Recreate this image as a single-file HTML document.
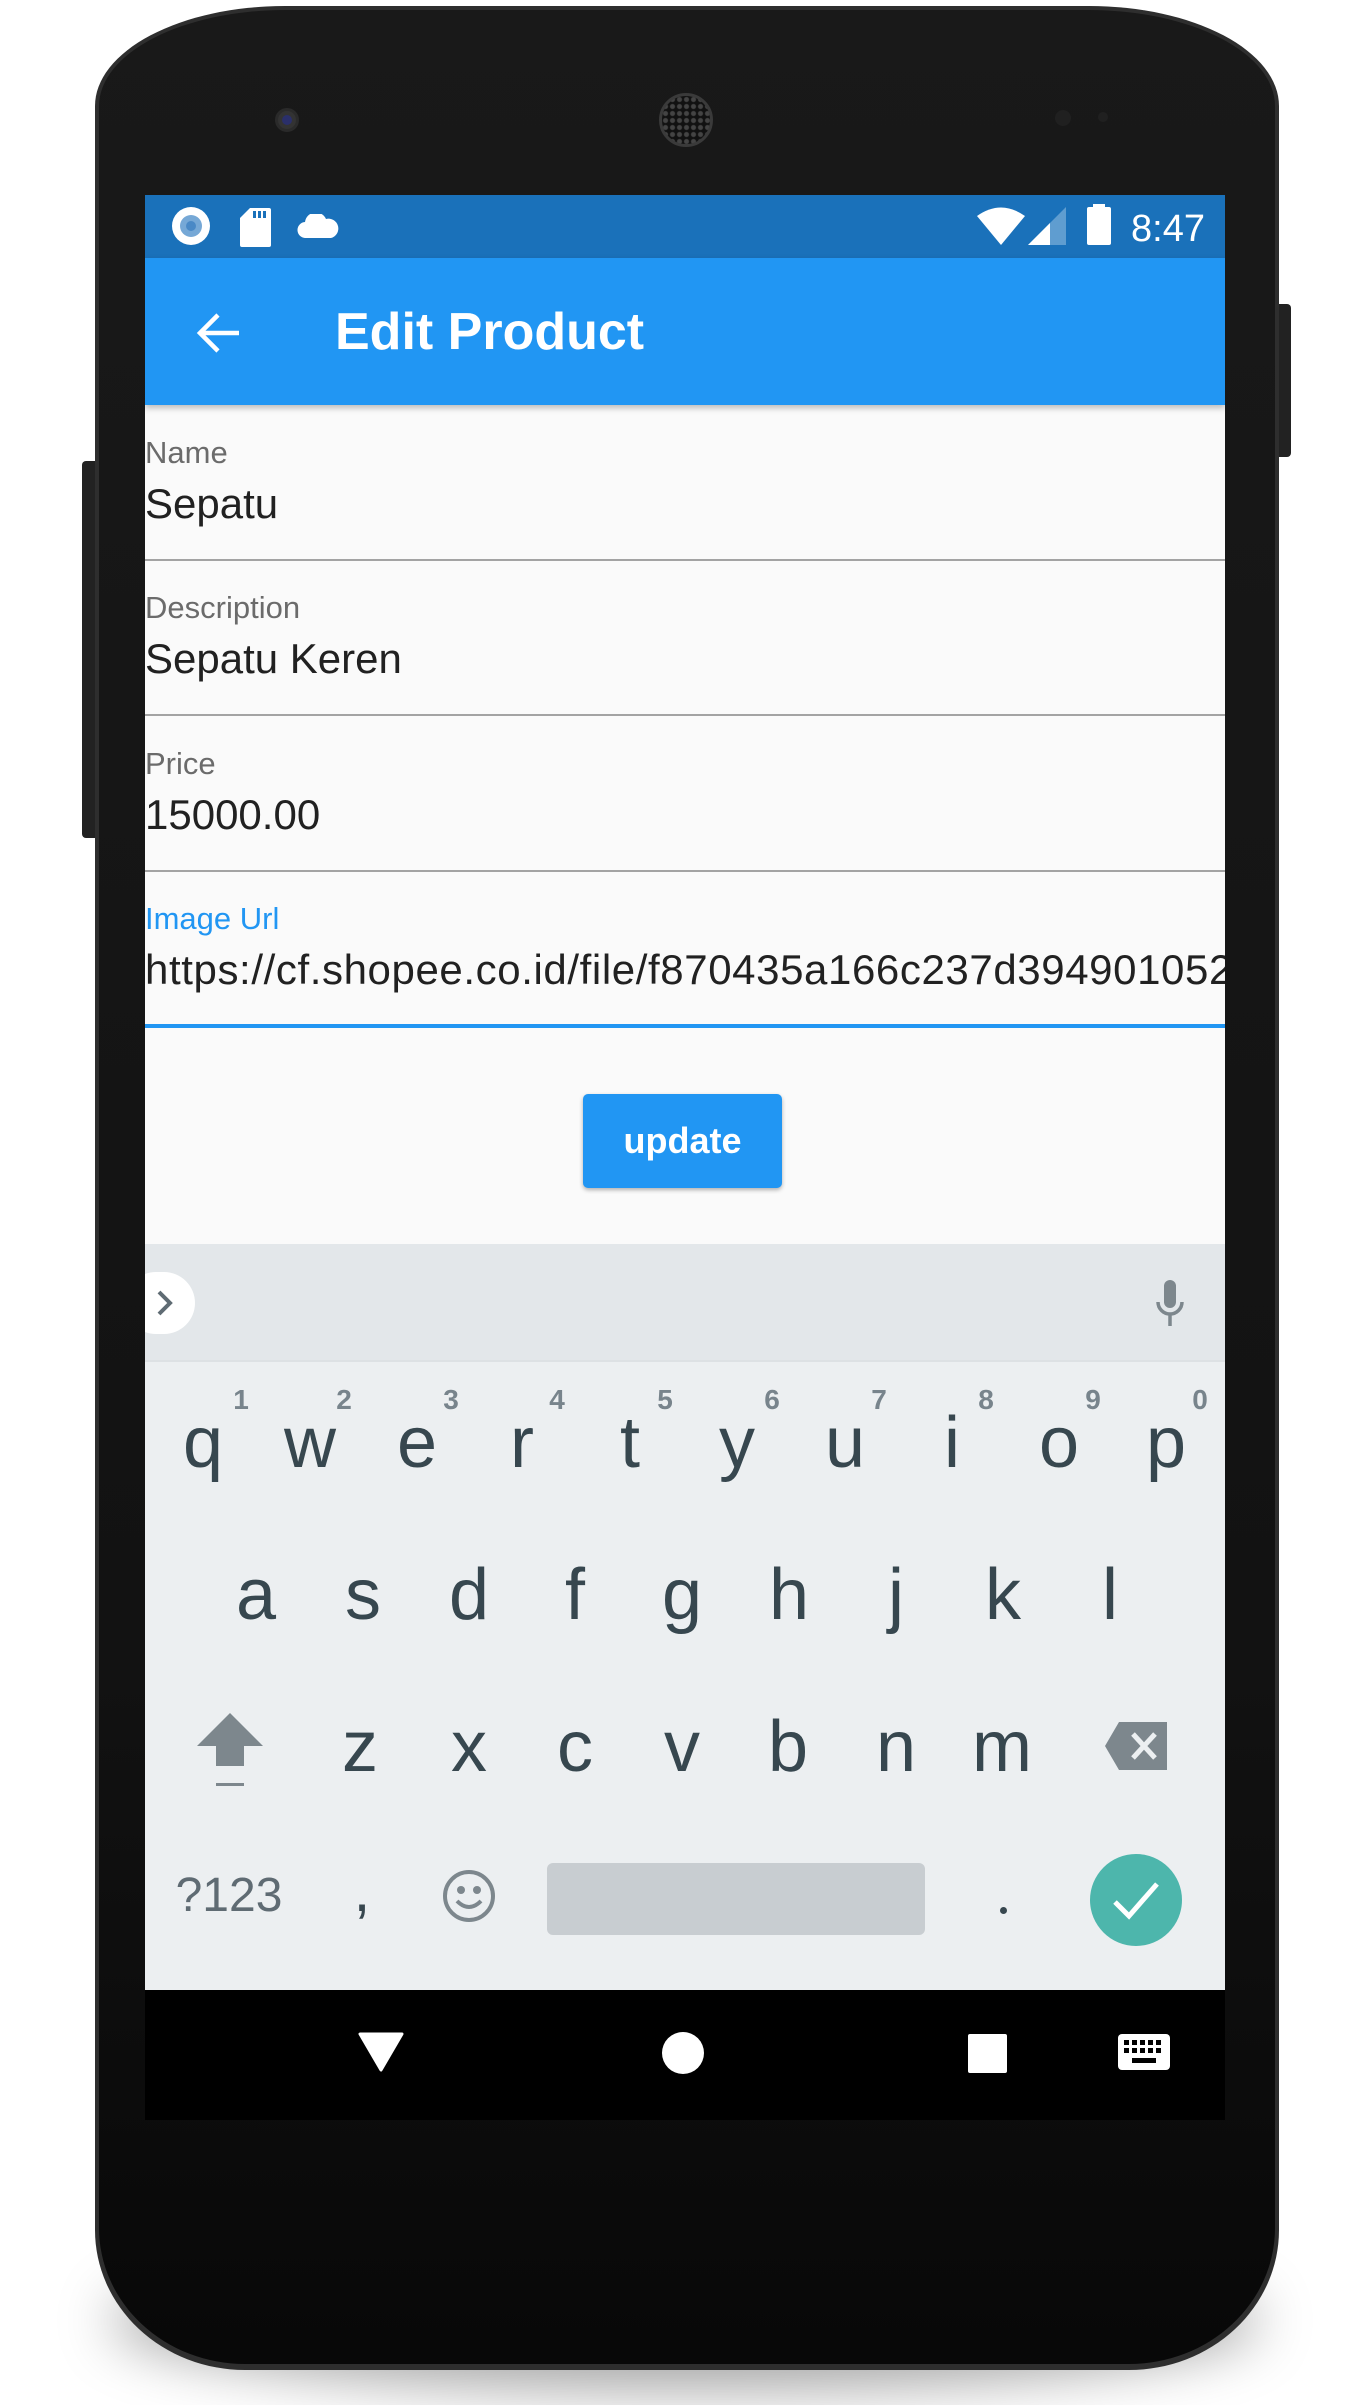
<!DOCTYPE html>
<html><head><meta charset="utf-8"><style>
*{margin:0;padding:0;box-sizing:border-box}
html,body{width:1370px;height:2405px;background:#fff;overflow:hidden;font-family:"Liberation Sans",Roboto,sans-serif}
.abs{position:absolute}
.t{position:absolute;white-space:nowrap}
.lbl{font-size:31px;line-height:31px;color:#6b6b6b}
.val{font-size:42px;line-height:42px;color:#212121}
.k{position:absolute;width:100px;text-align:center;font-size:72px;line-height:72px;color:#37474f}
.n{position:absolute;width:40px;text-align:center;font-size:28px;line-height:28px;font-weight:bold;color:#78848c}
</style></head><body>
<!-- shadow -->
<div class="abs" style="left:110px;top:2250px;width:1150px;height:140px;border-radius:50%;background:rgba(0,0,0,0.35);filter:blur(28px)"></div>
<!-- side buttons -->
<div class="abs" style="left:82px;top:461px;width:20px;height:377px;background:#222;border-radius:4px"></div>
<div class="abs" style="left:1270px;top:304px;width:21px;height:153px;background:#222;border-radius:4px"></div>
<!-- body -->
<div class="abs" style="left:95px;top:6px;width:1184px;height:2364px;background:#2e2e2e;border-radius:190px 190px 150px 150px / 100px 100px 140px 140px"></div>
<div class="abs" style="left:99px;top:10px;width:1176px;height:2354px;background:linear-gradient(#191919,#121212 70%,#080808);border-radius:186px 186px 146px 146px / 96px 96px 136px 136px"></div>
<!-- camera & speaker -->
<div class="abs" style="left:275px;top:108px;width:24px;height:24px;border-radius:50%;background:#333;border:3px solid #2a2a2a"></div>
<div class="abs" style="left:282px;top:115px;width:10px;height:10px;border-radius:50%;background:#2a2f6a"></div>
<div class="abs" style="left:659px;top:93px;width:54px;height:54px;border-radius:50%;background:radial-gradient(circle,#444 0 2px,#111 3px) 0 0/7px 7px;border:3px solid #3a3a3a"></div>
<div class="abs" style="left:1055px;top:110px;width:16px;height:16px;border-radius:50%;background:#202020"></div>
<div class="abs" style="left:1098px;top:112px;width:10px;height:10px;border-radius:50%;background:#202020"></div>

<!-- screen -->
<div class="abs" style="left:145px;top:195px;width:1080px;height:1925px;background:#fafafa;overflow:hidden">
  <div class="abs" style="left:0;top:0;width:1080px;height:63px;background:#1a71ba"></div>
  <div class="abs" style="left:27px;top:12px;width:38px;height:38px;border-radius:50%;background:#fff"></div>
  <div class="abs" style="left:35px;top:20px;width:22px;height:22px;border-radius:50%;background:#76a8d6"></div>
  <div class="abs" style="left:41px;top:26px;width:10px;height:10px;border-radius:50%;background:#4a89c6"></div>
  <svg class="abs" style="left:94px;top:12px" width="32" height="40" viewBox="0 0 32 40"><path d="M11 1h19a2 2 0 0 1 2 2v35a2 2 0 0 1-2 2H3a2 2 0 0 1-2-2V11z" fill="#fff"/><rect x="14" y="4" width="3" height="7" fill="#1a71ba"/><rect x="19" y="4" width="3" height="7" fill="#1a71ba"/><rect x="24" y="4" width="3" height="7" fill="#1a71ba"/></svg>
  <svg class="abs" style="left:152px;top:19px" width="42" height="24" viewBox="0 0 42 24"><path d="M9 24a8 8 0 0 1-1-16 11 11 0 0 1 21-3 9 9 0 0 1 5 19z" fill="#fff"/></svg>
  <svg class="abs" style="left:832px;top:12px" width="48" height="40" viewBox="0 0 48 40"><path d="M0 9Q24-8 48 9L24 38z" fill="#fff"/></svg>
  <svg class="abs" style="left:883px;top:12px" width="38" height="38" viewBox="0 0 38 38"><path d="M38 0V38H0z" fill="#5f9dd0"/><path d="M22 16V38H0z" fill="#fff"/></svg>
  <div class="abs" style="left:942px;top:12px;width:24px;height:38px;background:#fff;border-radius:2px"></div>
  <div class="abs" style="left:948px;top:9px;width:12px;height:4px;background:#fff"></div>
  <div class="t" style="left:986px;top:15px;font-size:38px;line-height:38px;color:#fff">8:47</div>
  <div class="abs" style="left:0;top:63px;width:1080px;height:147px;background:#2196f3;box-shadow:0 3px 6px rgba(0,0,0,0.25)"></div>
  <svg class="abs" style="left:50px;top:115px" width="46" height="46" viewBox="0 0 46 46"><path d="M44 23H6M23 5L5 23l18 18" stroke="#fff" stroke-width="4.5" fill="none"/></svg>
  <div class="t" style="left:190px;top:111px;font-size:52px;line-height:53px;color:#fff;font-weight:bold">Edit Product</div>

  <div class="t lbl" style="left:0;top:242px">Name</div>
  <div class="t val" style="left:0;top:288px">Sepatu</div>
  <div class="abs" style="left:0;top:364px;width:1080px;height:2px;background:#a3a3a3"></div>

  <div class="t lbl" style="left:0;top:397px">Description</div>
  <div class="t val" style="left:0;top:443px">Sepatu Keren</div>
  <div class="abs" style="left:0;top:519px;width:1080px;height:2px;background:#a3a3a3"></div>

  <div class="t lbl" style="left:0;top:553px">Price</div>
  <div class="t val" style="left:0;top:599px">15000.00</div>
  <div class="abs" style="left:0;top:675px;width:1080px;height:2px;background:#a3a3a3"></div>

  <div class="t lbl" style="left:0;top:708px;color:#2196f3">Image Url</div>
  <div class="t val" style="left:0;top:754px;letter-spacing:0.6px">https://cf.shopee.co.id/file/f870435a166c237d394901052</div>
  <div class="abs" style="left:0;top:829px;width:1080px;height:4px;background:#2196f3"></div>

  <div class="abs" style="left:438px;top:899px;width:199px;height:94px;background:#2196f3;border-radius:5px;box-shadow:0 2px 4px rgba(0,0,0,0.3);color:#fff;font-size:36px;font-weight:bold;line-height:94px;text-align:center">update</div>

  <div class="abs" style="left:0;top:1049px;width:1080px;height:116px;background:#e3e7ea"></div>
  <div class="abs" style="left:0;top:1165px;width:1080px;height:630px;background:#eceff1;border-top:2px solid #dde1e4"></div>
  <div class="abs" style="left:-20px;top:1077px;width:70px;height:62px;background:#fff;border-radius:31px"></div>
  <svg class="abs" style="left:10px;top:1094px" width="20" height="28" viewBox="0 0 20 28"><path d="M4 3l11 11L4 25" stroke="#5f6b73" stroke-width="4" fill="none"/></svg>
  <svg class="abs" style="left:1010px;top:1085px" width="30" height="50" viewBox="0 0 30 50"><rect x="9" y="0" width="12" height="28" rx="6" fill="#7d878d"/><path d="M3 22a12 12 0 0 0 24 0M15 34v12" stroke="#7d878d" stroke-width="3.5" fill="none"/></svg>

  <div class="k" style="left:8px;top:1212px">q</div>
  <div class="k" style="left:115px;top:1212px">w</div>
  <div class="k" style="left:222px;top:1212px">e</div>
  <div class="k" style="left:327px;top:1212px">r</div>
  <div class="k" style="left:435px;top:1212px">t</div>
  <div class="k" style="left:542px;top:1212px">y</div>
  <div class="k" style="left:650px;top:1212px">u</div>
  <div class="k" style="left:757px;top:1212px">i</div>
  <div class="k" style="left:864px;top:1212px">o</div>
  <div class="k" style="left:971px;top:1212px">p</div>
  <div class="n" style="left:76px;top:1191px">1</div>
  <div class="n" style="left:179px;top:1191px">2</div>
  <div class="n" style="left:286px;top:1191px">3</div>
  <div class="n" style="left:392px;top:1191px">4</div>
  <div class="n" style="left:500px;top:1191px">5</div>
  <div class="n" style="left:607px;top:1191px">6</div>
  <div class="n" style="left:714px;top:1191px">7</div>
  <div class="n" style="left:821px;top:1191px">8</div>
  <div class="n" style="left:928px;top:1191px">9</div>
  <div class="n" style="left:1035px;top:1191px">0</div>
  <div class="k" style="left:61px;top:1364px">a</div>
  <div class="k" style="left:168px;top:1364px">s</div>
  <div class="k" style="left:274px;top:1364px">d</div>
  <div class="k" style="left:380px;top:1364px">f</div>
  <div class="k" style="left:487px;top:1364px">g</div>
  <div class="k" style="left:594px;top:1364px">h</div>
  <div class="k" style="left:701px;top:1364px">j</div>
  <div class="k" style="left:808px;top:1364px">k</div>
  <div class="k" style="left:915px;top:1364px">l</div>
  <svg class="abs" style="left:52px;top:1518px" width="66" height="76" viewBox="0 0 66 76"><path d="M33 0L66 33H47v20H19V33H0z" fill="#7d878d"/><rect x="19" y="70" width="28" height="3" fill="#7d878d"/></svg>
  <div class="k" style="left:165px;top:1516px">z</div>
  <div class="k" style="left:274px;top:1516px">x</div>
  <div class="k" style="left:380px;top:1516px">c</div>
  <div class="k" style="left:487px;top:1516px">v</div>
  <div class="k" style="left:593px;top:1516px">b</div>
  <div class="k" style="left:701px;top:1516px">n</div>
  <div class="k" style="left:807px;top:1516px">m</div>
  <svg class="abs" style="left:960px;top:1527px" width="64" height="48" viewBox="0 0 64 48"><path d="M14 0H62V48H14L0 24z" fill="#7d878d"/><path d="M28 12l22 24M50 12L28 36" stroke="#eceff1" stroke-width="5"/></svg>
  <div class="t" style="left:24px;top:1676px;width:120px;text-align:center;font-size:48px;line-height:50px;color:#5f6b73">?123</div>
  <div class="k" style="left:167px;top:1660px;font-size:60px">,</div>
  <svg class="abs" style="left:296px;top:1673px" width="56" height="56" viewBox="0 0 56 56"><circle cx="28" cy="28" r="24" stroke="#7d878d" stroke-width="4" fill="none"/><circle cx="20" cy="22" r="4" fill="#7d878d"/><circle cx="36" cy="22" r="4" fill="#7d878d"/><path d="M16 33q12 12 24 0" stroke="#7d878d" stroke-width="4" fill="none"/></svg>
  <div class="abs" style="left:402px;top:1668px;width:378px;height:72px;background:#c8cdd1;border-radius:6px"></div>
  <div class="abs" style="left:855px;top:1712px;width:7px;height:7px;border-radius:50%;background:#37474f"></div>
  <div class="abs" style="left:945px;top:1659px;width:92px;height:92px;border-radius:50%;background:#4db6ac"></div>
  <svg class="abs" style="left:966px;top:1683px" width="50" height="44" viewBox="0 0 50 44"><path d="M4 24l14 14L46 6" stroke="#fff" stroke-width="5" fill="none"/></svg>

  <div class="abs" style="left:0;top:1795px;width:1080px;height:130px;background:#000"></div>
  <svg class="abs" style="left:213px;top:1837px" width="46" height="40" viewBox="0 0 46 40"><path d="M2 2H44L23 38z" fill="#fff" stroke="#fff" stroke-width="3" stroke-linejoin="round"/></svg>
  <div class="abs" style="left:517px;top:1837px;width:42px;height:42px;border-radius:50%;background:#fff"></div>
  <div class="abs" style="left:823px;top:1839px;width:39px;height:39px;background:#fff;border-radius:2px"></div>
  <svg class="abs" style="left:973px;top:1839px" width="52" height="36" viewBox="0 0 52 36"><rect x="0" y="0" width="52" height="36" rx="4" fill="#fff"/><g fill="#000"><rect x="6" y="6" width="5" height="5"/><rect x="14" y="6" width="5" height="5"/><rect x="22" y="6" width="5" height="5"/><rect x="30" y="6" width="5" height="5"/><rect x="38" y="6" width="5" height="5"/><rect x="6" y="14" width="5" height="5"/><rect x="14" y="14" width="5" height="5"/><rect x="22" y="14" width="5" height="5"/><rect x="30" y="14" width="5" height="5"/><rect x="38" y="14" width="5" height="5"/><rect x="14" y="24" width="24" height="5"/></g></svg>
</div>
</body></html>
